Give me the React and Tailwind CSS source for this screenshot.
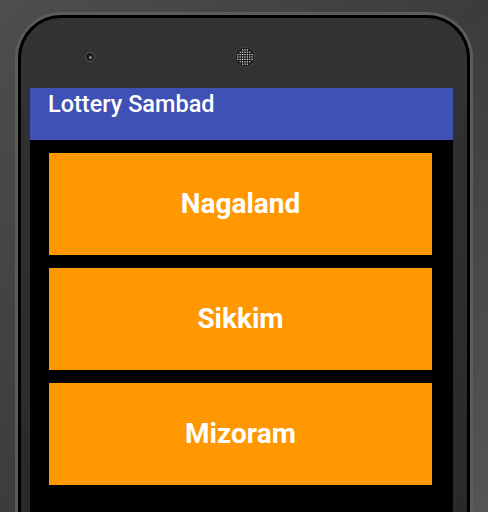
import React from "react";

const states = ["Nagaland", "Sikkim", "Mizoram"];

const Speaker = () => {
  const dots = [];
  const rows = [
    [-1, 0, 1],
    [-2, -1, 0, 1, 2],
    [-3, -2, -1, 0, 1, 2, 3],
    [-3, -2, -1, 0, 1, 2, 3],
    [-3, -2, -1, 0, 1, 2, 3],
    [-2, -1, 0, 1, 2],
    [-1, 0, 1],
  ];
  rows.forEach((row, r) =>
    row.forEach((c) =>
      dots.push(<rect key={`${r}-${c}`} x={11 + c * 2.4 - 0.6} y={3.8 + r * 2.4 - 0.6} width="1.2" height="1.2" fill="#e5e5e5" />)
    )
  );
  return (
    <svg width="22" height="22" viewBox="0 0 22 22">
      <circle cx="11" cy="11" r="10" fill="#1c1c1c" stroke="#444" strokeWidth="1" />
      {dots}
    </svg>
  );
};

export default function App() {
  return (
    <div
      className="w-[488px] h-[512px] overflow-hidden bg-gradient-to-br from-[#4e4e4e] via-[#3c3c3c] to-[#555555]"
      style={{ fontFamily: "Roboto, 'Liberation Sans', sans-serif" }}
    >
      <div className="ml-[15px] mt-[12px] w-[458px] h-[560px] rounded-t-[46px] border-[3px] border-b-0 border-[#5c5c5c]">
        <div className="h-full rounded-t-[43px] border-[3px] border-b-0 border-black bg-gradient-to-b from-[#333333] to-[#282828] pl-[9px] pr-[14px] pt-[70px]">
          <div className="relative">
            <div className="absolute left-[55px] -top-[36px] w-[10px] h-[10px] rounded-full bg-[#1a1a1a] border border-[#5a5a5a] flex items-center justify-center">
              <div className="w-[3px] h-[3px] rounded-full bg-[#8a8a8a]" />
            </div>
            <div className="absolute left-[204px] -top-[42px]">
              <Speaker />
            </div>
          </div>
          <div className="bg-black h-[440px]">
            <div className="h-[52px] bg-[#3F51B5] pl-[18px] pt-[1px]">
              <span className="text-[23.5px] leading-[30px] font-medium text-white">Lottery Sambad</span>
            </div>
            <div className="flex flex-col gap-[13px] pl-[19px] pr-[21px] pt-[13px]">
              {states.map((s) => (
                <div key={s} className="h-[102px] bg-[#FF9800] flex items-center justify-center">
                  <span className="text-[28px] font-bold text-white">{s}</span>
                </div>
              ))}
            </div>
          </div>
        </div>
      </div>
    </div>
  );
}
